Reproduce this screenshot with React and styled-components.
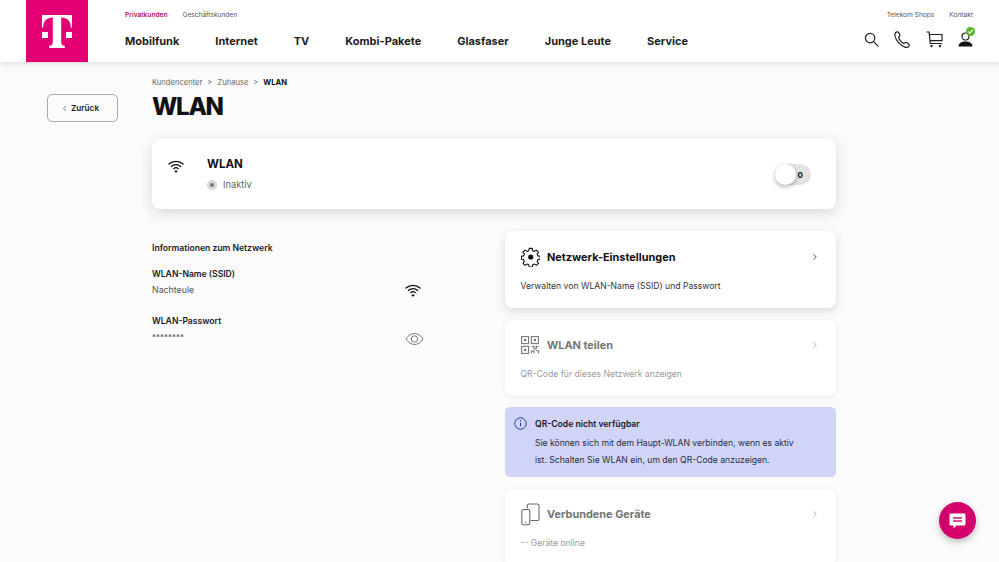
import styled, { createGlobalStyle } from "styled-components";
import { ChevronRight, ChevronLeft } from "lucide-react";

const GlobalStyle = createGlobalStyle`
  html, body {
    margin: 0;
    height: 100%;
    overflow: hidden;
    background: #fbfbfb;
    font-family: Inter, "Noto Sans", "Liberation Sans", sans-serif;
    color: #111;
  }
  * { box-sizing: border-box; }
`;

const Shell = styled.div`
  position: relative;
  width: 999px;
  height: 562px;
  overflow: hidden;
`;

const Header = styled.header`
  height: 62px;
  background: #fff;
  display: flex;
  padding-left: 26px;
  box-shadow: 0 1px 6px rgba(0, 0, 0, 0.16);
`;

const Logo = styled.div`
  width: 62px;
  height: 62px;
  padding-top: 2px;
  background: #e20074;
  display: flex;
  align-items: center;
  justify-content: center;
`;

const NavArea = styled.div`
  flex: 1;
  display: flex;
  flex-direction: column;
  padding: 10.5px 26px 0 37px;
`;

const TopRow = styled.div`
  display: flex;
  justify-content: space-between;
  height: 9px;
`;

const TopLinks = styled.div`
  display: flex;
  gap: ${(p) => p.$gap}px;
`;

const TopLink = styled.span`
  font-size: 6.6px;
  line-height: 9px;
  font-weight: ${(p) => (p.$active ? 600 : 400)};
  color: ${(p) => (p.$active ? "#b5155f" : "#555")};
`;

const MainRow = styled.div`
  display: flex;
  justify-content: space-between;
  align-items: center;
  margin-top: 10px;
  height: 22px;
`;

const MainLinks = styled.nav`
  display: flex;
  gap: 36px;
`;

const MainLink = styled.span`
  font-size: 11px;
  font-weight: 700;
  color: #1d1d1d;
`;

const IconRow = styled.div`
  display: flex;
  align-items: center;
  gap: 15px;
  margin-top: -3px;
`;

const Page = styled.div`
  display: flex;
  padding: 14px 0 0 47px;
`;

const BackColumn = styled.div`
  width: 105px;
  padding-top: 18px;
`;

const BackButton = styled.button`
  width: 71px;
  height: 28px;
  padding: 0 0 0 12px;
  background: transparent;
  border: 1px solid #a8a8a8;
  border-radius: 5px;
  display: flex;
  align-items: center;
  gap: 2px;
  font-family: inherit;
  font-size: 8.2px;
  font-weight: 600;
  color: #1d1d1d;
`;

const Content = styled.main`
  width: 684px;
`;

const Crumbs = styled.div`
  display: flex;
  align-items: center;
  gap: 5px;
  height: 12px;
  font-size: 7.6px;
  color: #6a6a6a;
`;

const CrumbCurrent = styled.span`
  font-weight: 700;
  color: #111;
`;

const Title = styled.h1`
  margin: 3px 0 16px;
  font-size: 24px;
  line-height: 32px;
  font-weight: 800;
  letter-spacing: -1.3px;
`;

const ToggleCard = styled.section`
  height: 70px;
  background: #fff;
  border-radius: 8px;
  box-shadow: 0 4px 14px rgba(0, 0, 0, 0.14);
  display: flex;
  align-items: flex-start;
  padding: 17px 25px 0 15px;
`;

const ToggleIcon = styled.div`
  width: 40px;
  padding: 2px 0 0 1px;
`;

const ToggleBody = styled.div`
  flex: 1;
`;

const ToggleTitle = styled.div`
  font-size: 11.5px;
  line-height: 16px;
  font-weight: 700;
`;

const Status = styled.div`
  display: flex;
  align-items: center;
  gap: 6px;
  margin-top: 6px;
  font-size: 9.3px;
  line-height: 14px;
  color: #666;
`;

const StatusDot = styled.span`
  width: 10px;
  height: 10px;
  border-radius: 50%;
  background: #d6d6d6;
  display: flex;
  align-items: center;
  justify-content: center;
  &::after {
    content: "";
    width: 4px;
    height: 4px;
    border-radius: 50%;
    background: #777;
  }
`;

const Switch = styled.div`
  width: 36px;
  height: 21px;
  margin-top: 8px;
  border-radius: 11px;
  background: #e3e3e3;
  display: flex;
  align-items: center;
  justify-content: flex-end;
  padding-right: 8px;
  position: relative;
  font-size: 8px;
  font-weight: 700;
`;

const Knob = styled.span`
  position: absolute;
  left: 0;
  top: 0;
  width: 21px;
  height: 21px;
  border-radius: 50%;
  background: #fff;
  box-shadow: 0 2px 5px rgba(0, 0, 0, 0.3);
`;

const Columns = styled.div`
  display: flex;
  margin-top: 22px;
`;

const InfoColumn = styled.div`
  width: 353px;
  padding: 10px 81px 0 0;
`;

const InfoHeading = styled.div`
  font-size: 8.6px;
  line-height: 14px;
  font-weight: 600;
  color: #1a1a1a;
`;

const InfoRow = styled.div`
  display: flex;
  justify-content: space-between;
  align-items: flex-end;
  margin-top: ${(p) => p.$top}px;
`;

const InfoLabel = styled.div`
  font-size: 8.6px;
  line-height: 14px;
  font-weight: 600;
  color: #1a1a1a;
`;

const InfoValue = styled.div`
  font-size: ${(p) => (p.$mask ? 8 : 8.8)}px;
  line-height: ${(p) => (p.$mask ? 12 : 14)}px;
  margin-top: ${(p) => (p.$mask ? 3 : 2)}px;
  color: #555;
`;

const RowIcon = styled.div`
  width: 19px;
  margin-bottom: ${(p) => p.$bottom}px;
  display: flex;
`;

const CardColumn = styled.div`
  width: 331px;
  display: flex;
  flex-direction: column;
  gap: 11.5px;
`;

const LinkCard = styled.section`
  height: ${(p) => p.$height}px;
  flex-shrink: 0;
  background: #fff;
  border-radius: 8px;
  box-shadow: ${(p) =>
    p.$muted ? "0 1px 5px rgba(0, 0, 0, 0.07)" : "0 3px 10px rgba(0, 0, 0, 0.14)"};
  padding: ${(p) => (p.$muted ? 14.5 : 15)}px 16px 0 15.5px;
`;

const CardHead = styled.div`
  display: flex;
  align-items: center;
  height: 22px;
  gap: 7px;
`;

const CardIcon = styled.div`
  width: 19.5px;
  height: 22px;
  display: flex;
  align-items: center;
  justify-content: center;
  flex-shrink: 0;
`;

const CardTitle = styled.div`
  flex: 1;
  font-size: 10.9px;
  font-weight: 700;
  color: ${(p) => (p.$muted ? "#757575" : "#111")};
`;

const CardText = styled.div`
  margin-top: 11px;
  font-size: 8.6px;
  line-height: 14px;
  color: ${(p) => (p.$muted ? "#9a9a9a" : "#333")};
`;

const Notice = styled.section`
  height: 70px;
  flex-shrink: 0;
  background: #d0d5f7;
  border-radius: 5px;
  display: flex;
  gap: 8px;
  padding: 10px 9px 0;
`;

const NoticeBody = styled.div`
  width: 270px;
`;

const NoticeTitle = styled.div`
  font-size: 8.6px;
  line-height: 14px;
  font-weight: 600;
  color: #14142b;
`;

const NoticeText = styled.div`
  margin-top: 4px;
  font-size: 8.6px;
  line-height: 17px;
  color: #2a2a40;
`;

const ChatButton = styled.button`
  position: absolute;
  right: 23px;
  bottom: 23px;
  width: 37px;
  height: 37px;
  padding: 0;
  border: none;
  border-radius: 50%;
  background: #d4006c;
  box-shadow: 0 3px 7px rgba(0, 0, 0, 0.25);
  display: flex;
  align-items: center;
  justify-content: center;
`;

const Badge = styled.span`
  position: absolute;
  right: -2px;
  top: -5px;
  width: 9px;
  height: 9px;
  border-radius: 50%;
  background: #5cb82a;
  display: flex;
  align-items: center;
  justify-content: center;
`;

const UserWrap = styled.div`
  position: relative;
  display: flex;
`;

const TelekomLogo = () => (
  <svg width="30" height="34" viewBox="0 0 30 34" fill="#fff">
    <rect x="0" y="17" width="6" height="6" />
    <rect x="24" y="17" width="6" height="6" />
    <path d="M0 0h30v12.5h-1.2c0-5.6-2.6-9.6-9.6-10v24c0 3 .8 4.1 3.6 4.2V33H7.2v-2.3c2.8-.1 3.6-1.2 3.6-4.2v-24c-7 .4-9.6 4.4-9.6 10H0z" />
  </svg>
);

const WifiIcon = ({ size = 16, color = "#111" }) => (
  <svg width={size} height={size} viewBox="0 0 24 24" fill="none" stroke={color} strokeWidth="2" strokeLinecap="round">
    <path d="M1.5 9C7.5 3.6 16.5 3.6 22.5 9" />
    <path d="M5 12.6c4-3.5 10-3.5 14 0" />
    <path d="M8.5 16c2-1.7 5-1.7 7 0" />
    <circle cx="12" cy="20" r="1.8" fill={color} stroke="none" />
  </svg>
);

const EyeIcon = () => (
  <svg width="19" height="14" viewBox="0 0 19 14" fill="none" stroke="#777" strokeWidth="1">
    <path d="M1 7c2.4-3.6 5.2-5.5 8.5-5.5S15.6 3.4 18 7c-2.4 3.6-5.2 5.5-8.5 5.5S3.4 10.6 1 7z" />
    <circle cx="9.5" cy="7" r="3.2" />
  </svg>
);

const SearchIcon = () => (
  <svg width="15" height="15" viewBox="0 0 16 16" fill="none" stroke="#222" strokeWidth="1.3" strokeLinecap="round">
    <circle cx="6.5" cy="6.5" r="5" />
    <path d="M10.2 10.2L15 15" />
  </svg>
);

const PhoneIcon = () => (
  <svg width="17" height="17" viewBox="0 0 17 17" fill="none" stroke="#222" strokeWidth="1.2" strokeLinejoin="round">
    <path d="M2 1.3c1.2-.8 2.1-.5 2.7.4l1 1.7c.4.8.3 1.5-.4 2.1l-.8.7c.4 2.2 3.1 5.4 5.4 6.2l.9-.7c.7-.5 1.4-.5 2.1 0l1.7 1.3c.8.7.9 1.5.2 2.3-.8.9-2 1.300-3.300 1C6.7 14.900 2 9.800 1 5 .7 3.500 1 2.100 2 1.300z" />
  </svg>
);

const CartIcon = () => (
  <svg width="17" height="17" viewBox="0 0 17 17" fill="none" stroke="#222" strokeWidth="1.2">
    <path d="M.5 1h2.6l1.2 11.5H16" />
    <path d="M3.4 3.5H16v6.2H4" />
    <circle cx="5.5" cy="15" r="1.2" fill="#222" stroke="none" />
    <circle cx="14" cy="15" r="1.2" fill="#222" stroke="none" />
  </svg>
);

const UserIcon = () => (
  <UserWrap>
    <svg width="15" height="15" viewBox="0 0 15 15" fill="none">
      <circle cx="7.5" cy="4.5" r="3.5" stroke="#222" strokeWidth="1.2" />
      <path d="M.5 14.5c0-3.5 3-5 7-5s7 1.5 7 5z" fill="#111" />
    </svg>
    <Badge>
      <svg width="7" height="7" viewBox="0 0 7 7" fill="none" stroke="#fff" strokeWidth="1.1">
        <path d="M1.2 3.6l1.6 1.6 3-3.4" />
      </svg>
    </Badge>
  </UserWrap>
);

const GearIcon = () => (
  <svg width="20" height="20" viewBox="0 0 24 24" fill="none" stroke="#111" strokeWidth="1.5" strokeLinejoin="round">
    <path d="M10 1.5h4l.6 3 2.3 1 2.6-1.7 2.8 2.8-1.7 2.6 1 2.3 2.9.5v4l-2.9.5-1 2.3 1.7 2.6-2.8 2.8-2.6-1.7-2.3 1-.6 3h-4l-.6-3-2.300-1-2.600 1.700-2.800-2.800 1.700-2.600-1-2.300-2.900-.5v-4l2.900-.5 1-2.300-1.700-2.600 2.800-2.800 2.600 1.700 2.300-1z" transform="translate(12 12) scale(.92) translate(-12 -13)" />
    <circle cx="12" cy="12" r="3.2" fill="#111" stroke="none" />
  </svg>
);

const QrIcon = () => (
  <svg width="18" height="18" viewBox="0 0 18 18" fill="none" stroke="#777" strokeWidth="1.1">
    <rect x=".6" y=".6" width="7" height="7" />
    <rect x="10.4" y=".6" width="7" height="7" />
    <rect x=".6" y="10.4" width="7" height="7" />
    <rect x="3" y="3" width="2.2" height="2.2" fill="#777" stroke="none" />
    <rect x="12.8" y="3" width="2.2" height="2.2" fill="#777" stroke="none" />
    <rect x="3" y="12.8" width="2.2" height="2.2" fill="#777" stroke="none" />
    <path d="M10.5 10.5h2.5v2.5h2.2v-2.5h2.300M10.500 17.500v-2.500h2.500v2.500M15.200 14.800h2.300v2.700" />
  </svg>
);

const DevicesIcon = () => (
  <svg width="20" height="23" viewBox="0 0 20 23" fill="none" stroke="#666" strokeWidth="1.1" strokeLinejoin="round">
    <path d="M6.5 5V2.5c0-1 .7-1.7 1.700-1.700h8.600c1 0 1.700.7 1.700 1.700v13.500c0 1-.7 1.700-1.700 1.700h-7" />
    <rect x=".8" y="6.3" width="8.2" height="15.7" rx="1.6" fill="#fff" />
    <circle cx="4.9" cy="19.6" r=".7" fill="#666" stroke="none" />
  </svg>
);

const InfoIcon = () => (
  <svg width="13" height="13" viewBox="0 0 13 13" fill="none" stroke="#2b3a9a" strokeWidth="1">
    <circle cx="6.5" cy="6.5" r="5.7" />
    <path d="M6.5 5.7v3.6" />
    <circle cx="6.5" cy="3.7" r=".7" fill="#2b3a9a" stroke="none" />
  </svg>
);

const ChatIcon = () => (
  <svg width="17" height="16" viewBox="0 0 17 16" fill="none">
    <path d="M2 .5h13c.9 0 1.5.6 1.5 1.5v9c0 .9-.6 1.5-1.5 1.5H7.5L4.5 15.5v-3H2C1.100 12.500.5 11.900.5 11V2C.5 1.100 1.100.5 2 .5z" fill="#fff" />
    <rect x="4" y="4.3" width="9" height="1.4" fill="#d4006c" />
    <rect x="4" y="7.3" width="9" height="1.4" fill="#d4006c" />
  </svg>
);

const mainLinks = ["Mobilfunk", "Internet", "TV", "Kombi-Pakete", "Glasfaser", "Junge Leute", "Service"];

const App = () => {
  return (
    <Shell>
      <GlobalStyle />
      <Header>
        <Logo>
          <TelekomLogo />
        </Logo>
        <NavArea>
          <TopRow>
            <TopLinks $gap={15}>
              <TopLink $active>Privatkunden</TopLink>
              <TopLink>Geschäftskunden</TopLink>
            </TopLinks>
            <TopLinks $gap={15}>
              <TopLink>Telekom Shops</TopLink>
              <TopLink>Kontakt</TopLink>
            </TopLinks>
          </TopRow>
          <MainRow>
            <MainLinks>
              {mainLinks.map((link) => (
                <MainLink key={link}>{link}</MainLink>
              ))}
            </MainLinks>
            <IconRow>
              <SearchIcon />
              <PhoneIcon />
              <CartIcon />
              <UserIcon />
            </IconRow>
          </MainRow>
        </NavArea>
      </Header>
      <Page>
        <BackColumn>
          <BackButton>
            <ChevronLeft size={9} strokeWidth={1.5} />
            Zurück
          </BackButton>
        </BackColumn>
        <Content>
          <Crumbs>
            <span>Kundencenter</span>
            <span>&gt;</span>
            <span>Zuhause</span>
            <span>&gt;</span>
            <CrumbCurrent>WLAN</CrumbCurrent>
          </Crumbs>
          <Title>WLAN</Title>
          <ToggleCard>
            <ToggleIcon>
              <WifiIcon />
            </ToggleIcon>
            <ToggleBody>
              <ToggleTitle>WLAN</ToggleTitle>
              <Status>
                <StatusDot />
                Inaktiv
              </Status>
            </ToggleBody>
            <Switch>
              <Knob />0
            </Switch>
          </ToggleCard>
          <Columns>
            <InfoColumn>
              <InfoHeading>Informationen zum Netzwerk</InfoHeading>
              <InfoRow $top={12}>
                <div>
                  <InfoLabel>WLAN-Name (SSID)</InfoLabel>
                  <InfoValue>Nachteule</InfoValue>
                </div>
                <RowIcon $bottom={-1}>
                  <WifiIcon />
                </RowIcon>
              </InfoRow>
              <InfoRow $top={17}>
                <div>
                  <InfoLabel>WLAN-Passwort</InfoLabel>
                  <InfoValue $mask>********</InfoValue>
                </div>
                <RowIcon $bottom={-3}>
                  <EyeIcon />
                </RowIcon>
              </InfoRow>
            </InfoColumn>
            <CardColumn>
              <LinkCard $height={77}>
                <CardHead>
                  <CardIcon>
                    <GearIcon />
                  </CardIcon>
                  <CardTitle>Netzwerk-Einstellungen</CardTitle>
                  <ChevronRight size={10} strokeWidth={1.8} color="#222" />
                </CardHead>
                <CardText>Verwalten von WLAN-Name (SSID) und Passwort</CardText>
              </LinkCard>
              <LinkCard $height={76} $muted>
                <CardHead>
                  <CardIcon>
                    <QrIcon />
                  </CardIcon>
                  <CardTitle $muted>WLAN teilen</CardTitle>
                  <ChevronRight size={10} strokeWidth={1.5} color="#888" />
                </CardHead>
                <CardText $muted>QR-Code für dieses Netzwerk anzeigen</CardText>
              </LinkCard>
              <Notice>
                <InfoIcon />
                <NoticeBody>
                  <NoticeTitle>QR-Code nicht verfügbar</NoticeTitle>
                  <NoticeText>
                    Sie können sich mit dem Haupt-WLAN verbinden, wenn es aktiv ist. Schalten Sie WLAN ein, um den QR-Code anzuzeigen.
                  </NoticeText>
                </NoticeBody>
              </Notice>
              <LinkCard $height={77} $muted>
                <CardHead>
                  <CardIcon>
                    <DevicesIcon />
                  </CardIcon>
                  <CardTitle $muted>Verbundene Geräte</CardTitle>
                  <ChevronRight size={10} strokeWidth={1.5} color="#888" />
                </CardHead>
                <CardText $muted>-- Geräte online</CardText>
              </LinkCard>
            </CardColumn>
          </Columns>
        </Content>
      </Page>
      <ChatButton>
        <ChatIcon />
      </ChatButton>
    </Shell>
  );
};

export default App;
